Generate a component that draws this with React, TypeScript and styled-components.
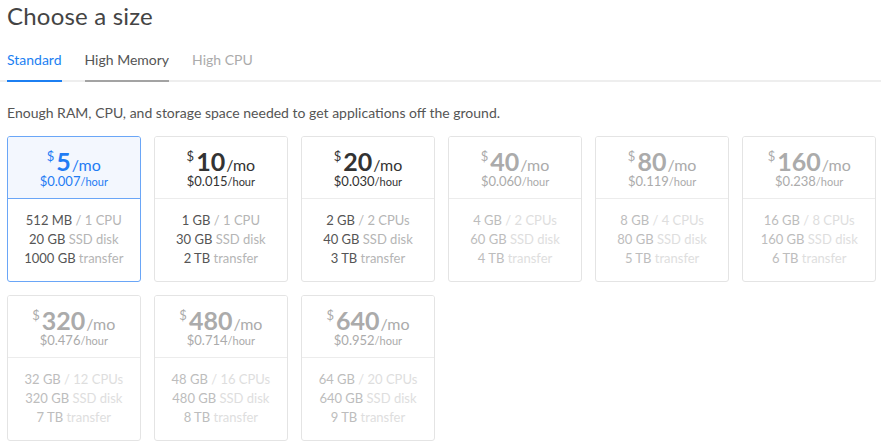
import React from "react";
import styled, { createGlobalStyle } from "styled-components";

const Global = createGlobalStyle`
  html, body { margin: 0; padding: 0; background: #fff; }
  body { font-family: "Lato", "Liberation Sans", sans-serif; -webkit-font-smoothing: antialiased; }
`;

const Page = styled.div`
  padding: 0 6px 0 7px;
  width: 869px;
`;

const Title = styled.h1`
  margin: 0;
  padding-top: 2px;
  font-size: 24px;
  font-weight: 400;
  line-height: 28px;
  color: #444;
  letter-spacing: 0.2px;
`;

const TabBar = styled.div`
  display: flex;
  gap: 23px;
  margin-top: 20px;
  border-bottom: 2px solid #eeeeee;
  margin-left: -7px;
  padding-left: 7px;
  width: 874px;
`;

const Tab = styled.div<{ $state: "active" | "hover" | "off" }>`
  font-size: 14px;
  line-height: 20px;
  padding-bottom: 10px;
  margin-bottom: -2px;
  border-bottom: 2px solid
    ${(p) => (p.$state === "active" ? "#1c7ff2" : p.$state === "hover" ? "#a3a3a3" : "transparent")};
  color: ${(p) => (p.$state === "active" ? "#1c7ff2" : p.$state === "hover" ? "#555" : "#ababab")};
`;

const Desc = styled.p`
  margin: 21px 0 0;
  font-size: 14px;
  line-height: 20px;
  color: #555;
`;

const Grid = styled.div`
  display: grid;
  grid-template-columns: repeat(6, 1fr);
  column-gap: 13.5px;
  row-gap: 13px;
  margin-top: 13px;
`;

type Tone = "selected" | "normal" | "disabled";

const Card = styled.div<{ $tone: Tone }>`
  border: 1px solid ${(p) => (p.$tone === "selected" ? "#6aa6f7" : "#e4e4e4")};
  border-radius: 3px;
  background: #fff;
  height: 146px;
  box-sizing: border-box;
  display: flex;
  flex-direction: column;
  overflow: hidden;
`;

const CardHead = styled.div<{ $tone: Tone }>`
  height: 62px;
  box-sizing: border-box;
  border-bottom: 1px solid ${(p) => (p.$tone === "selected" ? "#6aa6f7" : "#ececec")};
  background: ${(p) => (p.$tone === "selected" ? "#f3f7fe" : "#fff")};
  display: flex;
  flex-direction: column;
  align-items: center;
  padding-top: 12px;
  color: ${(p) => (p.$tone === "selected" ? "#1f7cf4" : p.$tone === "normal" ? "#333" : "#ababab")};
`;

const PriceLine = styled.div`
  display: flex;
  align-items: baseline;
  height: 24px;
`;

const Dollar = styled.span`
  font-size: 13px;
  align-self: flex-start;
  line-height: 15px;
  margin-right: 2px;
`;

const Amount = styled.span`
  font-size: 25px;
  line-height: 24px;
  font-weight: 700;
`;

const Per = styled.span`
  font-size: 16px;
  line-height: 18px;
  margin-left: 1px;
`;

const HourLine = styled.div`
  font-size: 13px;
  line-height: 16px;
`;

const HourUnit = styled.span`
  font-size: 11px;
`;

const CardBody = styled.div<{ $tone: Tone }>`
  flex: 1;
  display: flex;
  flex-direction: column;
  align-items: center;
  padding-top: 12px;
  font-size: 13px;
  line-height: 19px;
  color: ${(p) => (p.$tone === "disabled" ? "#bdbdbd" : "#555")};
`;

const Muted = styled.span<{ $tone: Tone }>`
  color: ${(p) => (p.$tone === "disabled" ? "#dedede" : "#b5b5b5")};
`;

type Plan = {
  price: string;
  hour: string;
  ram: string;
  cpu: string;
  disk: string;
  transfer: string;
  tone: Tone;
};

const plans: Plan[] = [
  { price: "5", hour: "$0.007", ram: "512 MB", cpu: "1 CPU", disk: "20 GB", transfer: "1000 GB", tone: "selected" },
  { price: "10", hour: "$0.015", ram: "1 GB", cpu: "1 CPU", disk: "30 GB", transfer: "2 TB", tone: "normal" },
  { price: "20", hour: "$0.030", ram: "2 GB", cpu: "2 CPUs", disk: "40 GB", transfer: "3 TB", tone: "normal" },
  { price: "40", hour: "$0.060", ram: "4 GB", cpu: "2 CPUs", disk: "60 GB", transfer: "4 TB", tone: "disabled" },
  { price: "80", hour: "$0.119", ram: "8 GB", cpu: "4 CPUs", disk: "80 GB", transfer: "5 TB", tone: "disabled" },
  { price: "160", hour: "$0.238", ram: "16 GB", cpu: "8 CPUs", disk: "160 GB", transfer: "6 TB", tone: "disabled" },
  { price: "320", hour: "$0.476", ram: "32 GB", cpu: "12 CPUs", disk: "320 GB", transfer: "7 TB", tone: "disabled" },
  { price: "480", hour: "$0.714", ram: "48 GB", cpu: "16 CPUs", disk: "480 GB", transfer: "8 TB", tone: "disabled" },
  { price: "640", hour: "$0.952", ram: "64 GB", cpu: "20 CPUs", disk: "640 GB", transfer: "9 TB", tone: "disabled" },
];

export default function App() {
  return (
    <Page>
      <Global />
      <Title>Choose a size</Title>
      <TabBar>
        <Tab $state="active">Standard</Tab>
        <Tab $state="hover">High Memory</Tab>
        <Tab $state="off">High CPU</Tab>
      </TabBar>
      <Desc>Enough RAM, CPU, and storage space needed to get applications off the ground.</Desc>
      <Grid>
        {plans.map((p) => (
          <Card key={p.price} $tone={p.tone}>
            <CardHead $tone={p.tone}>
              <PriceLine>
                <Dollar>$</Dollar>
                <Amount>{p.price}</Amount>
                <Per>/mo</Per>
              </PriceLine>
              <HourLine>
                {p.hour}
                <HourUnit>/hour</HourUnit>
              </HourLine>
            </CardHead>
            <CardBody $tone={p.tone}>
              <div>
                {p.ram} <Muted $tone={p.tone}>/ {p.cpu}</Muted>
              </div>
              <div>
                {p.disk} <Muted $tone={p.tone}>SSD disk</Muted>
              </div>
              <div>
                {p.transfer} <Muted $tone={p.tone}>transfer</Muted>
              </div>
            </CardBody>
          </Card>
        ))}
      </Grid>
    </Page>
  );
}
